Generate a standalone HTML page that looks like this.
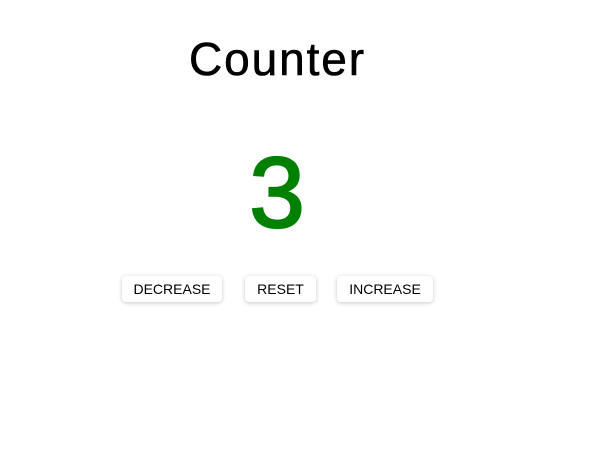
<!DOCTYPE html>
<html><head><meta charset="utf-8">
<style>
html,body{margin:0;padding:0;background:#fff;width:615px;height:452px;overflow:hidden;position:relative;font-family:"Liberation Sans",Arial,sans-serif}
.t{position:absolute;left:189px;top:36px;font-size:46px;line-height:46px;letter-spacing:1.9px;color:#000;white-space:nowrap;-webkit-text-stroke:0.6px #000}
.n{position:absolute;left:227px;width:100px;text-align:center;top:143px;font-size:100px;line-height:100px;color:#008000;-webkit-text-stroke:2.2px #008000}
.b{position:absolute;top:276px;height:26px;background:#fff;border-radius:4px;box-shadow:0 1px 4px rgba(0,0,0,0.22);font-size:14px;line-height:26px;text-align:center;color:#000}
</style></head><body>
<div class="t">Counter</div>
<div class="n">3</div>
<div class="b" style="left:122px;width:100px">DECREASE</div>
<div class="b" style="left:245px;width:71px">RESET</div>
<div class="b" style="left:337px;width:96px">INCREASE</div>
</body></html>
